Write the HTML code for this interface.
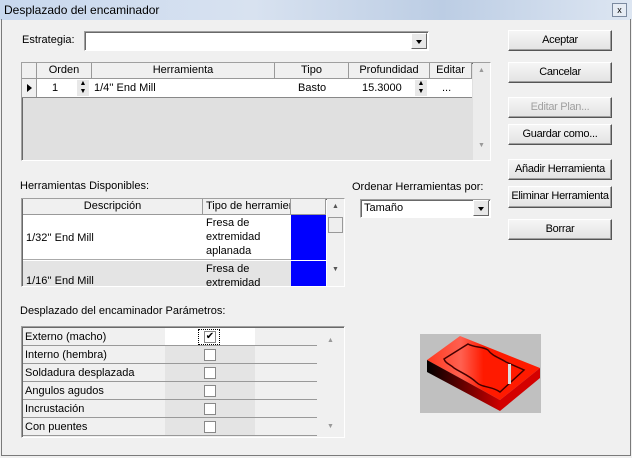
<!DOCTYPE html>
<html><head><style>
*{box-sizing:border-box;margin:0;padding:0}
body{width:632px;height:458px;background:#f0f0f0;font-family:"Liberation Sans",sans-serif;font-size:11px;color:#000;position:relative;overflow:hidden}
.a{position:absolute}
.btn{position:absolute;background:linear-gradient(#f6f6f6,#e3e3e3);border:1px solid;border-color:#fff #555 #555 #fff;box-shadow:inset -1px -1px 0 #a0a0a0;text-align:center;line-height:19px;white-space:nowrap;letter-spacing:-0.3px;overflow:hidden}
.sunk{position:absolute;border:1px solid;border-color:#a0a0a0 #fff #fff #a0a0a0;box-shadow:inset 1px 1px 0 #696969}
.dd{position:absolute;width:16px;height:16px;background:#e8e8e8;border:1px solid;border-color:#fff #666 #666 #fff}
.dd:after{content:"";position:absolute;left:4px;top:6px;border-left:3px solid transparent;border-right:3px solid transparent;border-top:4px solid #000}
.hd{position:absolute;background:#f0f0f0;border-right:1px solid #999;border-bottom:1px solid #999;text-align:center;line-height:15px;top:0;height:16px}
.cb{position:absolute;width:12px;height:12px;background:#fff;border:1px solid #888;left:204px}
.pr{position:absolute;left:1px;width:294px;height:18px;border-bottom:1px solid #999;padding-left:2px;line-height:18px}
</style></head><body>
<div class="a" style="left:0;top:0;width:632px;height:20px;background:linear-gradient(90deg,#c8d8ee,#d8e2f0 40%,#bccde4 70%,#dde6f2)"></div>
<div class="a" style="left:4px;top:3px;font-size:12px">Desplazado del encaminador</div>
<div class="a" style="left:612px;top:3px;width:15px;height:14px;border:1px solid #7b8aa0;background:#e6ecf4;font-size:9px;text-align:center;line-height:12px">x</div>
<div class="a" style="left:1px;top:19px;width:630px;height:437px;border:1px solid #7a7a7a;border-top:none"></div>

<div class="a" style="left:22px;top:34px">Estrategia:</div>
<div class="sunk" style="left:84px;top:31px;width:345px;height:20px;background:#fff"><div class="dd" style="left:326px;top:1px"></div></div>

<div class="btn" style="left:508px;top:30px;width:104px;height:21px">Aceptar</div>
<div class="btn" style="left:508px;top:62px;width:104px;height:21px">Cancelar</div>
<div class="btn" style="left:508px;top:97px;width:104px;height:21px;color:#a0a0a0">Editar Plan...</div>
<div class="btn" style="left:508px;top:124px;width:104px;height:21px">Guardar como...</div>
<div class="btn" style="left:508px;top:159px;width:104px;height:21px">Añadir Herramienta</div>
<div class="btn" style="left:508px;top:186px;width:104px;height:22px">Eliminar Herramienta</div>
<div class="btn" style="left:508px;top:219px;width:104px;height:21px">Borrar</div>

<!-- grid1 -->
<div class="sunk" style="left:21px;top:62px;width:470px;height:99px;background:#e0e0e0">
<div class="hd" style="left:0;width:15px"></div>
<div class="hd" style="left:15px;width:55px">Orden</div>
<div class="hd" style="left:70px;width:183px">Herramienta</div>
<div class="hd" style="left:253px;width:74px">Tipo</div>
<div class="hd" style="left:327px;width:81px">Profundidad</div>
<div class="hd" style="left:408px;width:42px">Editar</div>
<div class="a" style="left:0;top:16px;width:450px;height:19px;background:#fff;border-bottom:1px solid #888;line-height:18px">
 <div class="a" style="left:0;top:0;width:15px;height:18px;background:#f0f0f0;border-right:1px solid #999"></div>
 <div class="a" style="left:5px;top:5px;border-top:4px solid transparent;border-bottom:4px solid transparent;border-left:5px solid #000"></div>
 <div class="a" style="left:30px;top:0">1</div>
 <div class="a" style="left:55px;top:1px;width:12px;height:16px;background:#e8e8e8;font-size:7px;line-height:8px;text-align:center">▲<br>▼</div>
 <div class="a" style="left:72px;top:0">1/4'' End Mill</div>
 <div class="a" style="left:276px;top:0">Basto</div>
 <div class="a" style="left:340px;top:0">15.3000</div>
 <div class="a" style="left:393px;top:1px;width:12px;height:16px;background:#e8e8e8;font-size:7px;line-height:8px;text-align:center">▲<br>▼</div>
 <div class="a" style="left:420px;top:0">...</div>
</div>
<div class="a" style="left:451px;top:0;width:17px;height:97px;background:#ececec"><div style="font-size:7px;color:#999;text-align:center;margin-top:4px">▲</div><div style="font-size:7px;color:#999;text-align:center;margin-top:68px">▼</div></div>
</div>

<div class="a" style="left:20px;top:180px">Herramientas Disponibles:</div>
<div class="sunk" style="left:21px;top:198px;width:324px;height:89px;background:#fff;overflow:hidden">
<div class="hd" style="left:1px;width:180px">Descripción</div>
<div class="hd" style="left:181px;width:88px;text-align:left;padding-left:3px;overflow:hidden;white-space:nowrap">Tipo de herramienta</div>
<div class="hd" style="left:269px;width:35px"></div>
<div class="a" style="left:1px;top:16px;width:303px;height:45px;border-bottom:1px solid #aaa"></div>
<div class="a" style="left:4px;top:33px">1/32'' End Mill</div>
<div class="a" style="left:184px;top:17px;line-height:14px">Fresa de<br>extremidad<br>aplanada</div>
<div class="a" style="left:269px;top:16px;width:35px;height:45px;background:#0000ff"></div>
<div class="a" style="left:1px;top:62px;width:268px;height:30px;background:#e4e4e4"></div>
<div class="a" style="left:4px;top:76px">1/16'' End Mill</div>
<div class="a" style="left:184px;top:63px;line-height:14px">Fresa de<br>extremidad</div>
<div class="a" style="left:269px;top:62px;width:35px;height:30px;background:#0000ff"></div>
<div class="a" style="left:305px;top:0;width:17px;height:88px;background:#f0f0f0"><div style="font-size:7px;color:#555;text-align:center;margin-top:4px">▲</div><div class="a" style="left:1px;top:18px;width:15px;height:16px;border:1px solid #999;background:#eee"></div><div style="font-size:7px;color:#555;text-align:center;margin-top:56px">▼</div></div>
</div>

<div class="a" style="left:352px;top:181px">Ordenar Herramientas por:</div>
<div class="sunk" style="left:360px;top:199px;width:131px;height:19px;background:#fff;line-height:16px;padding-left:3px">Tamaño<div class="dd" style="left:112px;top:0px"></div></div>

<div class="a" style="left:20px;top:305px">Desplazado del encaminador Parámetros:</div>
<div class="sunk" style="left:21px;top:326px;width:324px;height:112px;background:#f0f0f0">
<div class="a" style="left:143px;top:1px;width:90px;height:108px;background:#e4e4e4"></div>
<div class="a" style="left:143px;top:1px;width:90px;height:18px;background:#fff"></div>
<div class="pr" style="top:1px">Externo (macho)</div>
<div class="pr" style="top:19px">Interno (hembra)</div>
<div class="pr" style="top:37px">Soldadura desplazada</div>
<div class="pr" style="top:55px">Angulos agudos</div>
<div class="pr" style="top:73px">Incrustación</div>
<div class="pr" style="top:91px">Con puentes</div>
<div class="a" style="left:176px;top:2px;width:22px;height:16px;border:1px dotted #000"></div>
<div class="cb" style="left:182px;top:4px;font-size:10px;line-height:10px;text-align:center">✔</div>
<div class="cb" style="left:182px;top:22px"></div>
<div class="cb" style="left:182px;top:40px"></div>
<div class="cb" style="left:182px;top:58px"></div>
<div class="cb" style="left:182px;top:76px"></div>
<div class="cb" style="left:182px;top:94px"></div>
<div class="a" style="left:305px;top:10px;font-size:7px;color:#999">▲</div>
<div class="a" style="left:305px;top:96px;font-size:7px;color:#999">▼</div>
</div>

<svg class="a" style="left:420px;top:334px" width="121" height="79" viewBox="0 0 121 79">
<defs><linearGradient id="g" x1="0" x2="1"><stop offset="0" stop-color="#000"/><stop offset="1" stop-color="#c00"/></linearGradient>
<linearGradient id="t" x1="0" x2="1"><stop offset="0" stop-color="#ff3a20"/><stop offset="0.3" stop-color="#ff6050"/><stop offset="0.5" stop-color="#ff1a00"/></linearGradient></defs>
<rect width="121" height="79" fill="#c0c0c0"/>
<polygon points="7,26 40,2 120,34 80,66" fill="url(#t)"/>
<polygon points="7,26 80,66 80,77 7,38" fill="url(#g)"/>
<polygon points="80,66 120,34 120,44 80,77" fill="#d40000"/>
<path d="M24,25 L48,10 C55,14 62,12 68,16 C72,22 80,24 86,28 L104,36 L80,58 C72,52 62,54 56,48 C50,42 40,38 34,34 C30,30 26,30 24,25Z" fill="none" stroke="#400" stroke-width="1.5"/>
<rect x="88" y="30" width="3" height="20" fill="#ddd"/>
</svg>
</body></html>
